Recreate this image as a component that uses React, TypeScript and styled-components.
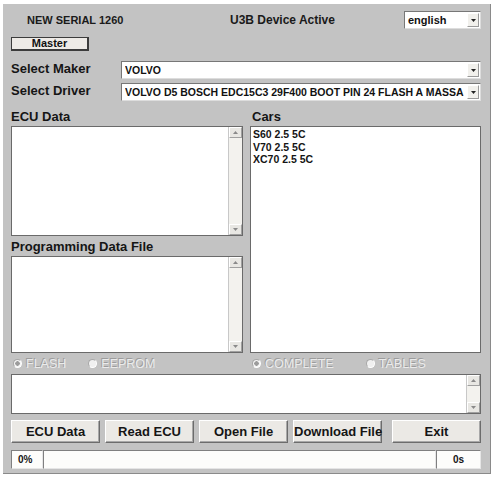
import React from 'react';
import styled, { createGlobalStyle } from 'styled-components';

const GlobalStyle = createGlobalStyle`
  html, body {
    margin: 0;
    padding: 0;
    background: #ffffff;
  }
  body {
    font-family: "Liberation Sans", Arial, sans-serif;
    color: #111;
  }
`;

const Window = styled.div`
  box-sizing: border-box;
  width: 488px;
  height: 470px;
  margin: 4px 0 0 3px;
  padding: 7px 9px 0 8px;
  background: #c3c3c3;
  border-right: 1px solid #8a8a8a;
  border-bottom: 1px solid #8a8a8a;
  display: flex;
  flex-direction: column;
`;

const Header = styled.div`
  height: 18px;
  display: flex;
  align-items: center;
`;

const Serial = styled.span`
  width: 203px;
  padding-left: 16px;
  font-size: 11px;
  font-weight: bold;
  color: #1a1a1a;
`;

const Title = styled.span`
  font-size: 12px;
  font-weight: bold;
  color: #1a1a1a;
`;

const FlatButton = styled.div`
  box-sizing: border-box;
  width: 78px;
  height: 14px;
  margin-top: 8px;
  background: #eeebe7;
  border: 1px solid #3c3c3c;
  border-right-width: 2px;
  border-bottom-width: 2px;
  font-size: 11px;
  font-weight: bold;
  line-height: 11px;
  text-align: center;
`;

const FieldRow = styled.div<{ $top: number }>`
  height: 18px;
  margin-top: ${p => p.$top}px;
  display: flex;
  align-items: center;
`;

const FieldLabel = styled.span`
  width: 110px;
  margin-top: -3px;
  font-size: 13px;
  font-weight: bold;
  color: #151515;
`;

const Combo = styled.div<{ $width?: number }>`
  box-sizing: border-box;
  height: 18px;
  ${p => (p.$width ? `width: ${p.$width}px;` : 'flex: 1;')}
  background: #fff;
  border: 1px solid #777;
  border-right-color: #ddd;
  border-bottom-color: #ddd;
  display: flex;
  align-items: center;
  padding-left: 3px;
`;

const ComboText = styled.span`
  flex: 1;
  font-size: 10.5px;
  font-weight: bold;
  white-space: nowrap;
  overflow: hidden;
`;

const ArrowButton = styled.span`
  box-sizing: border-box;
  width: 12px;
  height: 14px;
  margin-right: 1px;
  background: #f1f0ec;
  border: 1px solid #fff;
  border-right-color: #9a9a9a;
  border-bottom-color: #9a9a9a;
  display: flex;
  align-items: center;
  justify-content: center;
`;

const Columns = styled.div`
  margin-top: 5px;
  display: grid;
  grid-template-columns: 232px 231px;
  column-gap: 7px;
`;

const Column = styled.div`
  display: flex;
  flex-direction: column;
`;

const SectionLabel = styled.div<{ $indent?: number }>`
  height: 20px;
  line-height: 22px;
  padding-left: ${p => p.$indent ?? 0}px;
  font-size: 13px;
  font-weight: bold;
  color: #151515;
`;

const TextBox = styled.div<{ $h: number }>`
  box-sizing: border-box;
  height: ${p => p.$h}px;
  background: #fff;
  border: 1px solid #6a6a6a;
  display: flex;
`;

const TextBody = styled.div`
  flex: 1;
  padding: 1px 2px;
  font-size: 10.5px;
  font-weight: bold;
  line-height: 12.5px;
  color: #151515;
`;

const ScrollTrack = styled.div`
  width: 13px;
  background: #f3f2ee;
  border-left: 1px solid #c8c8c8;
  display: flex;
  flex-direction: column;
  justify-content: space-between;
`;

const ScrollBtn = styled.div`
  box-sizing: border-box;
  height: 11px;
  background: #e8e7e3;
  border: 1px solid #fff;
  border-right-color: #a0a0a0;
  border-bottom-color: #a0a0a0;
  display: flex;
  align-items: center;
  justify-content: center;
`;

const RadioRow = styled.div`
  height: 21px;
  display: grid;
  grid-template-columns: 232px 231px;
  column-gap: 7px;
  align-items: center;
`;

const RadioGroup = styled.div`
  display: flex;
  align-items: center;
  padding-left: 2px;
`;

const Radio = styled.span<{ $gap: number }>`
  display: flex;
  align-items: center;
  margin-right: ${p => p.$gap}px;
  font-size: 12.5px;
  color: #ebebeb;
  text-shadow: -1px -1px 0 #9c9c9c;
`;

const RadioDot = styled.span<{ $on?: boolean }>`
  box-sizing: border-box;
  width: 9px;
  height: 9px;
  margin-right: 4px;
  border-radius: 50%;
  background: ${p => (p.$on ? 'radial-gradient(circle, #9c9c9c 0 2px, #f4f4f4 2.5px)' : '#f0f0f0')};
  border: 1px solid #a8a8a8;
  border-right-color: #fff;
  border-bottom-color: #fff;
`;

const ButtonRow = styled.div`
  margin-top: 6px;
  height: 23px;
  display: flex;
  gap: 5px;
`;

const Button = styled.div<{ $push?: boolean }>`
  box-sizing: border-box;
  width: 89px;
  height: 23px;
  margin-left: ${p => (p.$push ? 'auto' : '0')};
  background: #ebe9e5;
  border: 1px solid #fff;
  border-right-color: #6c6c6c;
  border-bottom-color: #6c6c6c;
  box-shadow: inset -1px -1px 0 #a8a8a8;
  font-size: 13px;
  font-weight: bold;
  line-height: 21px;
  text-align: center;
  white-space: nowrap;
  color: #151515;
`;

const StatusBar = styled.div`
  margin-top: 7px;
  height: 19px;
  display: flex;
`;

const StatusCell = styled.div<{ $w?: number; $center?: boolean }>`
  box-sizing: border-box;
  ${p => (p.$w ? `width: ${p.$w}px;` : 'flex: 1;')}
  height: 19px;
  background: #fdfdfb;
  border: 1px solid #808080;
  border-right-color: #e6e6e6;
  border-bottom-color: #e6e6e6;
  font-size: 10px;
  font-weight: bold;
  line-height: 17px;
  padding-left: ${p => (p.$center ? 0 : 6)}px;
  text-align: ${p => (p.$center ? 'center' : 'left')};
  color: #151515;
`;

const Arrow: React.FC<{ up?: boolean; color?: string }> = ({ up, color = '#222' }) => (
  <svg width="5" height="3" viewBox="0 0 5 3">
    <path d={up ? 'M2.5 0L5 3H0z' : 'M0 0h5L2.5 3z'} fill={color} />
  </svg>
);

const ScrollBar: React.FC = () => (
  <ScrollTrack>
    <ScrollBtn>
      <Arrow up color="#8a8a8a" />
    </ScrollBtn>
    <ScrollBtn>
      <Arrow color="#8a8a8a" />
    </ScrollBtn>
  </ScrollTrack>
);

const cars = ['S60 2.5 5C', 'V70 2.5 5C', 'XC70 2.5 5C'];

export default function App() {
  return (
    <>
      <GlobalStyle />
      <Window>
        <Header>
          <Serial>NEW SERIAL 1260</Serial>
          <Title>U3B Device Active</Title>
          <Combo $width={77} style={{ marginLeft: 'auto' }}>
            <ComboText style={{ fontSize: 11 }}>english</ComboText>
            <ArrowButton>
              <Arrow />
            </ArrowButton>
          </Combo>
        </Header>

        <FlatButton>Master</FlatButton>

        <FieldRow $top={10}>
          <FieldLabel>Select Maker</FieldLabel>
          <Combo>
            <ComboText>VOLVO</ComboText>
            <ArrowButton>
              <Arrow />
            </ArrowButton>
          </Combo>
        </FieldRow>

        <FieldRow $top={4}>
          <FieldLabel>Select Driver</FieldLabel>
          <Combo>
            <ComboText>VOLVO D5 BOSCH EDC15C3 29F400 BOOT PIN 24 FLASH A MASSA</ComboText>
            <ArrowButton>
              <Arrow />
            </ArrowButton>
          </Combo>
        </FieldRow>

        <Columns>
          <Column>
            <SectionLabel>ECU Data</SectionLabel>
            <TextBox $h={110}>
              <TextBody />
              <ScrollBar />
            </TextBox>
            <SectionLabel>Programming Data File</SectionLabel>
            <TextBox $h={97}>
              <TextBody />
              <ScrollBar />
            </TextBox>
          </Column>
          <Column>
            <SectionLabel $indent={2}>Cars</SectionLabel>
            <TextBox $h={227}>
              <TextBody>
                {cars.map(c => (
                  <div key={c}>{c}</div>
                ))}
              </TextBody>
            </TextBox>
          </Column>
        </Columns>

        <RadioRow>
          <RadioGroup>
            <Radio $gap={22}>
              <RadioDot $on />
              FLASH
            </Radio>
            <Radio $gap={0}>
              <RadioDot />
              EEPROM
            </Radio>
          </RadioGroup>
          <RadioGroup>
            <Radio $gap={32}>
              <RadioDot $on />
              COMPLETE
            </Radio>
            <Radio $gap={0}>
              <RadioDot />
              TABLES
            </Radio>
          </RadioGroup>
        </RadioRow>

        <TextBox $h={40}>
          <TextBody />
          <ScrollBar />
        </TextBox>

        <ButtonRow>
          <Button>ECU Data</Button>
          <Button>Read ECU</Button>
          <Button>Open File</Button>
          <Button>Download File</Button>
          <Button $push>Exit</Button>
        </ButtonRow>

        <StatusBar>
          <StatusCell $w={32}>0%</StatusCell>
          <StatusCell />
          <StatusCell $w={45} $center>
            0s
          </StatusCell>
        </StatusBar>
      </Window>
    </>
  );
}
